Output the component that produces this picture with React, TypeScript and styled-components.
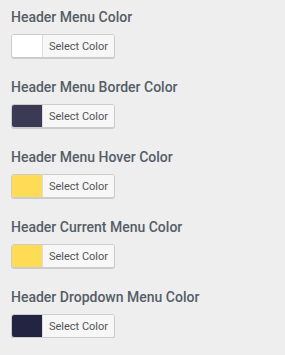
import React from "react";
import styled, { createGlobalStyle } from "styled-components";

const Global = createGlobalStyle`
  html, body { margin: 0; padding: 0; background: #eeeeee; }
  body { font-family: Roboto, "Noto Sans", Arial, sans-serif; }
`;

const Panel = styled.div`
  padding: 8px 11px 0 11px;
  display: flex;
  flex-direction: column;
  gap: 20px;
`;

const Control = styled.div`
  display: flex;
  flex-direction: column;
  gap: 8px;
`;

const Title = styled.span`
  font-size: 14px;
  line-height: 18px;
  font-weight: 500;
  color: #555d66;
`;

const ColorButton = styled.button`
  display: flex;
  align-items: stretch;
  width: 104px;
  height: 24px;
  padding: 0;
  border: 1px solid #cccccc;
  border-radius: 3px;
  box-shadow: 0 1px 0 #cccccc;
  background: #f7f7f7;
  overflow: hidden;
  cursor: pointer;
`;

const Swatch = styled.span<{ $color: string }>`
  width: 30px;
  flex: none;
  background: ${(p) => p.$color};
  border-right: 1px solid #dddddd;
`;

const Label = styled.span`
  flex: 1;
  display: flex;
  align-items: center;
  justify-content: center;
  font-family: Roboto, "Noto Sans", Arial, sans-serif;
  font-size: 11px;
  color: #555555;
  background: #f7f7f7;
`;

const items = [
  { title: "Header Menu Color", color: "#ffffff" },
  { title: "Header Menu Border Color", color: "#3b3a55" },
  { title: "Header Menu Hover Color", color: "#ffdc56" },
  { title: "Header Current Menu Color", color: "#ffdc56" },
  { title: "Header Dropdown Menu Color", color: "#232442" },
];

export default function App() {
  return (
    <>
      <Global />
      <Panel>
        {items.map((it) => (
          <Control key={it.title}>
            <Title>{it.title}</Title>
            <ColorButton type="button">
              <Swatch $color={it.color} />
              <Label>Select Color</Label>
            </ColorButton>
          </Control>
        ))}
      </Panel>
    </>
  );
}
